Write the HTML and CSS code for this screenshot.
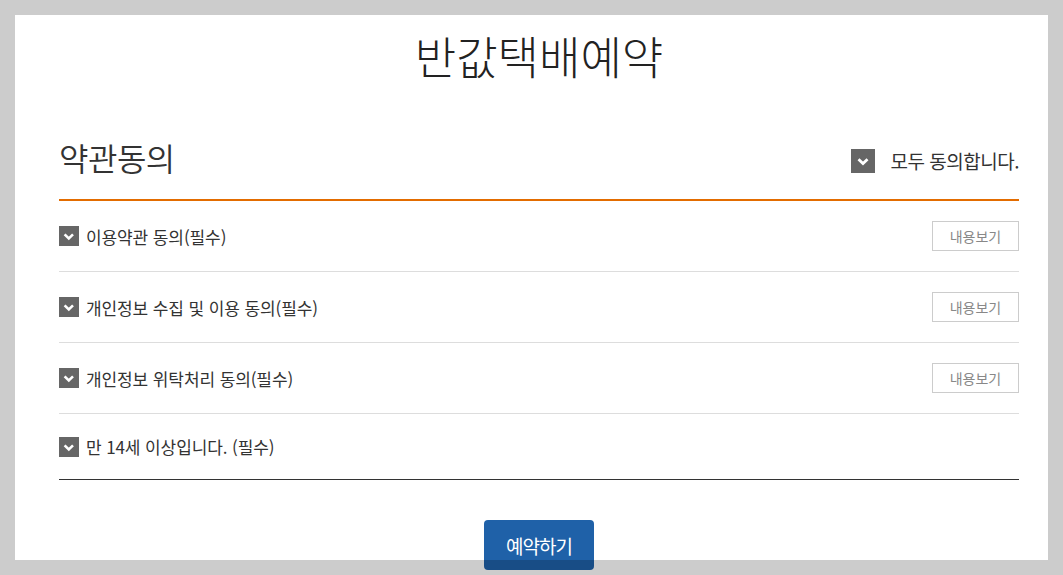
FILE: index.html
```html
<!DOCTYPE html>
<html lang="ko">
<head>
<meta charset="utf-8">
<title>반값택배예약</title>
<link rel="stylesheet" href="styles.css">
</head>
<body>
<div class="page">
  <h1 class="title">반값택배예약</h1>
  <div class="terms">
    <div class="terms-head">
      <h2 class="terms-title">약관동의</h2>
      <label class="check-all">
        <span class="box box-lg"><svg viewBox="0 0 24 24"><path d="M7.5 10.3 L12 14.6 L16.5 10.3" fill="none" stroke="#fff" stroke-width="2.8"/></svg></span>
        <span class="check-all-text">모두 동의합니다.</span>
      </label>
    </div>
    <ul class="term-list">
      <li class="term">
        <span class="box"><svg viewBox="0 0 20 20"><path d="M5.6 8.4 L9.8 12.4 L14 8.4" fill="none" stroke="#fff" stroke-width="2.6"/></svg></span>
        <span class="term-text">이용약관 동의(필수)</span>
        <button class="view-btn" type="button">내용보기</button>
      </li>
      <li class="term">
        <span class="box"><svg viewBox="0 0 20 20"><path d="M5.6 8.4 L9.8 12.4 L14 8.4" fill="none" stroke="#fff" stroke-width="2.6"/></svg></span>
        <span class="term-text">개인정보 수집 및 이용 동의(필수)</span>
        <button class="view-btn" type="button">내용보기</button>
      </li>
      <li class="term">
        <span class="box"><svg viewBox="0 0 20 20"><path d="M5.6 8.4 L9.8 12.4 L14 8.4" fill="none" stroke="#fff" stroke-width="2.6"/></svg></span>
        <span class="term-text">개인정보 위탁처리 동의(필수)</span>
        <button class="view-btn" type="button">내용보기</button>
      </li>
      <li class="term term-last">
        <span class="box"><svg viewBox="0 0 20 20"><path d="M5.6 8.4 L9.8 12.4 L14 8.4" fill="none" stroke="#fff" stroke-width="2.6"/></svg></span>
        <span class="term-text">만 14세 이상입니다. (필수)</span>
      </li>
    </ul>
  </div>
  <div class="actions">
    <button class="submit" type="button">예약하기</button>
  </div>
</div>
<div class="frame"></div>
</body>
</html>
```

FILE: styles.css
```css
html, body {
  margin: 0;
  padding: 0;
  background: #fff;
}
body {
  font-family: "Noto Sans CJK KR", "Noto Sans", sans-serif;
  color: #333;
  overflow: hidden;
}
.frame {
  position: fixed;
  inset: 0;
  border: 15px solid rgba(0, 0, 0, 0.2);
  pointer-events: none;
}
.page {
  width: 960px;
  margin-left: 59px;
  padding-top: 26px;
}
.title {
  margin: 0;
  text-align: center;
  font-size: 45px;
  font-weight: 300;
  letter-spacing: 0;
  line-height: 60px;
  color: #222;
}
.terms-head {
  display: flex;
  align-items: center;
  justify-content: space-between;
  height: 85px;
  margin-top: 28px;
  border-bottom: 2px solid #e36c00;
}
.terms-title {
  margin: 0;
  font-size: 32px;
  font-weight: 350;
  letter-spacing: -0.5px;
  color: #333;
}
.check-all {
  display: flex;
  align-items: center;
  gap: 16px;
  margin-top: 8px;
}
.check-all-text {
  font-size: 19px;
  letter-spacing: -0.5px;
  color: #333;
}
.box {
  display: inline-flex;
  width: 20px;
  height: 20px;
  background: #666;
  flex: none;
}
.box svg {
  width: 100%;
  height: 100%;
}
.box-lg {
  width: 24px;
  height: 24px;
}
.term-list {
  list-style: none;
  margin: 0;
  padding: 0;
  border-bottom: 1px solid #333;
}
.term {
  display: flex;
  align-items: center;
  height: 70px;
  border-bottom: 1px solid #ddd;
}
.term-last {
  height: 65px;
  border-bottom: 0;
  padding-bottom: 0;
}
.term-text {
  margin-left: 7px;
  font-size: 17px;
  letter-spacing: -0.1px;
  color: #333;
}
.view-btn {
  margin-left: auto;
  width: 87px;
  height: 30px;
  padding: 0;
  border: 1px solid #ccc;
  background: #fff;
  font-family: inherit;
  font-size: 14px;
  letter-spacing: 0;
  color: #888;
}
.actions {
  display: flex;
  justify-content: center;
  padding-top: 40px;
}
.submit {
  width: 110px;
  height: 50px;
  border: 0;
  border-radius: 4px;
  background: #1f61a8;
  color: #fff;
  font-family: inherit;
  font-size: 19px;
  letter-spacing: -1px;
  padding: 0;
}
```
